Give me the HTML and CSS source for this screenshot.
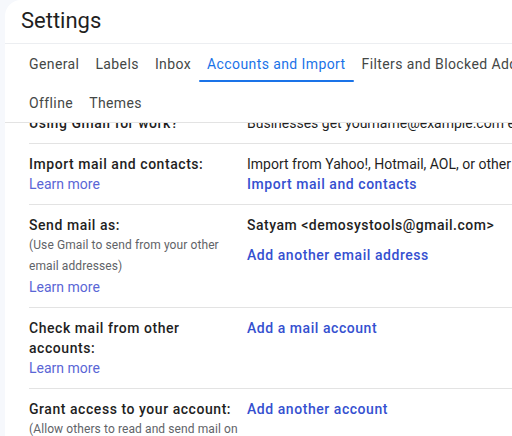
FILE: index.html
```html
<!DOCTYPE html>
<html>
<head>
<meta charset="utf-8">
<link rel="stylesheet" href="styles.css">
</head>
<body>
<div class="panel">
  <header class="head"><h1 class="title">Settings</h1></header>
  <nav class="tabs">
    <div class="tab-row">
      <span class="tab">General</span>
      <span class="tab">Labels</span>
      <span class="tab">Inbox</span>
      <span class="tab active">Accounts and Import</span>
      <span class="tab">Filters and Blocked Addresses</span>
      <span class="tab">Forwarding and POP/IMAP</span>
    </div>
    <div class="tab-row">
      <span class="tab">Offline</span>
      <span class="tab">Themes</span>
    </div>
  </nav>
  <div class="scroll">
    <div class="list">
      <div class="row">
        <div class="label"><div class="name">Using Gmail for work?</div></div>
        <div class="value"><div>Businesses get yourname@example.com email, more storage, and admin tools with Google Workspace.</div></div>
      </div>
      <div class="row">
        <div class="label"><div class="name">Import mail and contacts:</div><a class="learn">Learn more</a></div>
        <div class="value"><div>Import from Yahoo!, Hotmail, AOL, or other webmail or POP3 accounts.</div><a class="link">Import mail and contacts</a></div>
      </div>
      <div class="row">
        <div class="label"><div class="name">Send mail as:</div><div class="note">(Use Gmail to send from your other<br>email addresses)</div><a class="learn">Learn more</a></div>
        <div class="value"><div class="sender">Satyam &lt;demosystools@gmail.com&gt;</div><a class="link">Add another email address</a></div>
      </div>
      <div class="row">
        <div class="label"><div class="name">Check mail from other<br>accounts:</div><a class="learn">Learn more</a></div>
        <div class="value"><a class="link">Add a mail account</a></div>
      </div>
      <div class="row">
        <div class="label"><div class="name">Grant access to your account:</div><div class="note">(Allow others to read and send mail on<br>your behalf)</div></div>
        <div class="value"><a class="link">Add another account</a></div>
      </div>
    </div>
  </div>
</div>
</body>
</html>
```
FILE: styles.css
```css
html, body {
  margin: 0;
  padding: 0;
  height: 100%;
  overflow: hidden;
}
body {
  background: #f6f8fc;
  font-family: Roboto, "Liberation Sans", Arial, sans-serif;
  color: #1f1f1f;
}
.panel {
  margin-left: 5px;
  width: 1100px;
  height: 100%;
  background: #ffffff;
  border-top-left-radius: 16px;
  display: flex;
  flex-direction: column;
}
.head {
  height: 43px;
  border-bottom: 1px solid #eceef1;
  padding-left: 16px;
  box-sizing: content-box;
}
.title {
  margin: 0;
  padding-top: 7px;
  font-size: 22px;
  line-height: 28px;
  font-weight: 400;
  color: #1f1f1f;
}
.tabs {
  padding-left: 16px;
  border-bottom: 1px solid #e3e3e3;
}
.tab-row {
  display: flex;
  height: 39px;
}
.tab {
  display: flex;
  align-items: center;
  padding: 0 8px;
  font-size: 14px;
  line-height: 20px;
  letter-spacing: 0.4px;
  color: #444746;
  white-space: nowrap;
  position: relative;
}
.tab.active {
  color: #1a73e8;
}
.tab.active::after {
  content: "";
  position: absolute;
  left: 0;
  right: 0;
  bottom: 1px;
  height: 2px;
  border-radius: 2px;
  background: #1a73e8;
}
.scroll {
  flex: 1;
  overflow: hidden;
}
.list {
  margin-top: -20px;
  padding-left: 24px;
}
.row {
  display: flex;
  padding: 10px 0;
  border-bottom: 1px solid #e3e3e3;
}
.label {
  width: 218px;
  flex: none;
}
.name {
  font-size: 14px;
  line-height: 20px;
  font-weight: 500;
  letter-spacing: 0.55px;
  color: #1f1f1f;
}
.note {
  font-size: 12px;
  line-height: 21px;
  letter-spacing: 0.1px;
  color: #5f6368;
}
.learn {
  display: block;
  font-size: 14px;
  line-height: 20px;
  color: #5a66d6;
}
.value {
  font-size: 14px;
  line-height: 20px;
  white-space: nowrap;
  color: #1f1f1f;
}
.sender {
  font-weight: 500;
  letter-spacing: 0.5px;
  margin-bottom: 10px;
}
.link {
  display: block;
  font-weight: 500;
  letter-spacing: 0.55px;
  color: #3550d0;
}
```
